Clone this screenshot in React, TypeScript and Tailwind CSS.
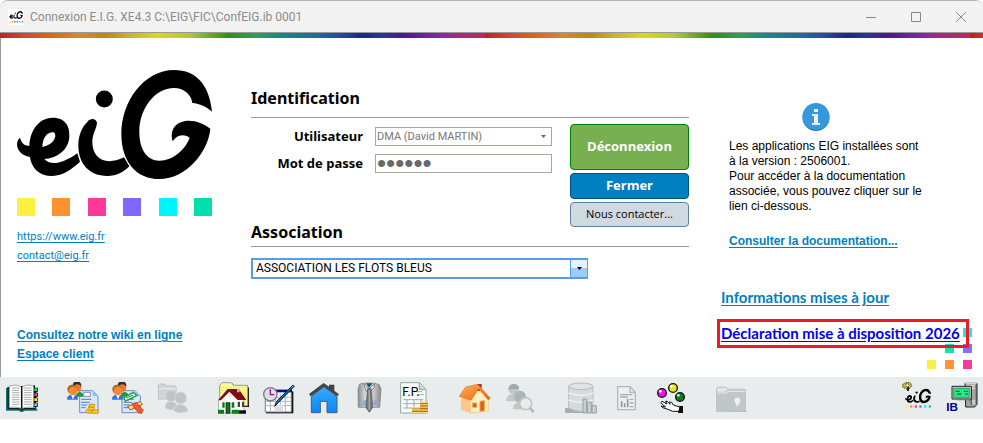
import type { ReactNode } from 'react';

const UI = 'font-["Roboto","Liberation_Sans",sans-serif]';
const UI_BOLD = 'font-["Liberation_Sans",sans-serif] font-bold';
const LINK = 'text-[#0080c0] underline underline-offset-2';

const RAINBOW =
  'bg-[repeating-linear-gradient(90deg,#c02020_0px,#d04830_25px,#e06414_50px,#d88828_78px,#c08810_106px,#d0b030_130px,#d8d820_158px,#b0c838_190px,#60a820_212px,#309010_228px,#30a050_255px,#188888_280px,#2068a0_318px,#2050a0_338px,#182888_362px,#3030a0_384px,#481890_402px,#7020a0_425px,#9028a0_443px,#a82880_460px,#c02858_485px)]';

function LogoShapes() {
  return (
    <g fill="#000">
      <path
        fillRule="evenodd"
        d="M60 262C65 278 72 286 88 286C91 235 120 202 158 202C198 202 210 230 208 260C205 300 170 324 133 326C150 345 182 344 232 309L240 334C210 361 186 377 152 377C114 377 93 347 90 320C65 316 51 300 51 281C51 271 56 266 60 262ZM127 290C128 258 145 243 162 246C174 259 158 285 127 290Z"
      />
      <circle cx="313" cy="146" r="25.500" />
      <path d="M262 215C271 202 289 204 291 218C288 241 277 248 277 276C277 320 312 350 372 321L388 348C370 366 350 377 322 377C267 377 235 340 235 285C235 256 246 229 262 215Z" />
      <path d="M636 184C628 105 590 59 522 59C431 59 364 155 364 250C364 337 411 386 478 386C559 386 625 304 631 235C612 220 590 211 567 211C527 211 508 239 518 273C530 254 549 249 569 262C557 296 520 331 478 331C440 331 418 296 418 245C418 173 466 113 522 113C551 113 574 132 577 158C599 160 621 170 636 184Z" />
    </g>
  );
}

const LOGO_COLORS = ['#fcf040', '#ff9133', '#fc3a9c', '#7d69ff', '#00f4ff', '#00dfab'];

function Glyph({ children, dim = false }: { children: ReactNode; dim?: boolean }) {
  return (
    <svg viewBox="0 0 96 96" className={dim ? 'size-8 opacity-80' : 'size-8'} aria-hidden="true">
      {children}
    </svg>
  );
}

function People() {
  return (
    <>
      <circle cx="30" cy="10" r="13" fill="#352b38" />
      <circle cx="31" cy="18" r="11" fill="#ef7624" />
      <path d="M26 44Q28 30 39 30Q49 31 49 44Z" fill="#24963a" />
      <circle cx="15" cy="22" r="14" fill="#a96b23" />
      <circle cx="18" cy="27" r="13" fill="#f58a36" />
      <path d="M0 53Q0 39 12 39L18 45L24 39Q33 41 33 53Z" fill="#3472e4" />
      <path d="M13 40L18 53L23 40Z" fill="#fff" />
    </>
  );
}

function Sheet() {
  return (
    <>
      <path d="M38 26H77L93 42V92H38Z" fill="#d7e9ff" stroke="#7189c2" strokeWidth="3" />
      <path d="M77 26V42H93Z" fill="#83c4ff" />
      <path d="M43 52H73M43 61H68M43 69H61M43 77H56" stroke="#5879b0" strokeWidth="3" />
    </>
  );
}

function Ball({ x, y, c }: { x: number; y: number; c: string }) {
  return (
    <>
      <circle cx={x} cy={y} r="13" fill={c} stroke="#111" strokeWidth="4" />
      <circle cx={x - 5} cy={y - 5} r="4" fill="#fff" />
    </>
  );
}

const groups: { label: string; icon: ReactNode }[][] = [
  [
    {
      label: 'Annuaire',
      icon: (
        <Glyph>
          <path d="M0 18H6V80H42L47 86L53 80H94V86H57L47 91L38 86H0Z" fill="#087878" />
          <path d="M4 15H10V78H43L47 83L51 78H90V82H54L47 88L40 82H4Z" fill="#102020" />
          <path d="M10 12Q31 5 46 14V80Q32 72 10 77Z" fill="#fff" stroke="#777" strokeWidth="2" />
          <path d="M84 12Q65 5 48 14V80Q62 72 84 77Z" fill="#fff" stroke="#777" strokeWidth="2" />
          <path d="M18 18H40M18 25H40M18 32H40M18 39H40M18 46H40M18 53H40M18 60H40M18 67H40M54 18H77M54 25H77M54 32H77M54 39H77M54 46H77M54 53H77M54 60H77M54 67H77" stroke="#aaa" strokeWidth="3" />
          <path d="M47 12V82M85 10V76" stroke="#111" strokeWidth="4" />
          <path d="M87 18H91V77H87Z" fill="#111" />
          <path d="M85 17H96V29H85ZM85 32H96V44H85ZM85 47H96V59H85ZM85 62H96V74H85Z" fill="#111" />
          <path d="M85 19H94V27H85Z" fill="#18d840" />
          <path d="M85 34H94V42H85Z" fill="#f020f0" />
          <path d="M85 49H94V57H85Z" fill="#f4e820" />
          <path d="M85 64H94V72H85Z" fill="#20e8f0" />
        </Glyph>
      ),
    },
  ],
  [
    {
      label: 'Facturation',
      icon: (
        <Glyph>
          <Sheet />
          <path d="M50 31H70V43H50Z" fill="#fff" stroke="#555f91" strokeWidth="2" />
          <People />
          <g fill="#ffc928" stroke="#b97708" strokeWidth="2">
            <rect x="57" y="83" width="21" height="10" rx="4" />
            <rect x="63" y="75" width="19" height="9" rx="4" />
            <path d="M68 66L84 67L81 76L65 74Z" />
            <rect x="75" y="84" width="20" height="10" rx="4" />
          </g>
        </Glyph>
      ),
    },
    {
      label: 'Validation des dossiers',
      icon: (
        <Glyph>
          <g transform="translate(-8 0)">
            <Sheet />
          </g>
          <People />
          <path d="M35 46L64 31L75 41L40 57Z" fill="#c9f4d3" stroke="#319848" strokeWidth="4" />
          <path d="M42 47L63 40M47 55L66 46" stroke="#319848" strokeWidth="3" />
          <path d="M47 73L84 59L92 67L55 84Z" fill="#ffd787" stroke="#9d6427" strokeWidth="3" />
          <path d="M60 65L73 62L94 84L88 95L78 91L65 76Z" fill="#f45a2d" stroke="#ad3515" strokeWidth="2" />
        </Glyph>
      ),
    },
    {
      label: 'Dossiers usagers',
      icon: (
        <Glyph dim>
          <path d="M4 9L8 6H24L29 12H57V51H4Z" fill="#ccd0d0" stroke="#b3b8b8" strokeWidth="3" />
          <path d="M5 20H57" stroke="#eef0f0" strokeWidth="3" />
          <g fill="#b5bbbb" stroke="#d9dddd" strokeWidth="2">
            <path d="M24 77Q25 58 41 58Q60 59 61 77Q41 91 24 77Z" />
            <circle cx="42" cy="42" r="17" />
            <path d="M50 87Q53 68 70 67Q91 69 93 87Q71 99 50 87Z" />
            <circle cx="71" cy="48" r="18" />
          </g>
        </Glyph>
      ),
    },
  ],
  [
    {
      label: 'Établissement',
      icon: (
        <Glyph>
          <path d="M6 13L14 3H42L49 12H88L93 18V75H6Z" fill="#111" />
          <path d="M5 11L13 2H40L47 10H89V71H5Z" fill="#fffb9a" stroke="#969696" strokeWidth="3" />
          <path d="M8 17H87M8 25H87M8 33H87M70 41H87M78 49H87" stroke="#e8d828" strokeWidth="3" strokeDasharray="3 3" />
          <path d="M2 55L33 23L78 55V93H2Z" fill="#fff" stroke="#888" strokeWidth="2" />
          <path d="M0 55L29 21H62L85 54H59L34 29L9 55Z" fill="#800b13" />
          <path d="M57 20H65V31H57Z" fill="#b6b6b6" />
          <path d="M24 62H36V94H24Z" fill="#087d16" stroke="#111" strokeWidth="2" />
          <path d="M13 61H20V77H13ZM41 61H49V77H41Z" fill="#087d16" />
          <path d="M59 59H66V75H59ZM72 59H78V75H72Z" fill="#444" />
          <path d="M0 83H18V95H0ZM41 83H63V95H41Z" fill="#078316" />
          <path d="M63 85H84V95H63Z" fill="#111" />
        </Glyph>
      ),
    },
    {
      label: 'Planning',
      icon: (
        <Glyph>
          <path d="M9 28H91V94H9Z" fill="#111" />
          <path d="M7 25H85V90H7Z" fill="#fff" stroke="#777" strokeWidth="3" />
          <path d="M28 23H87V31H28Z" fill="#08107b" />
          <path d="M22 36V89M37 36V89M52 36V89M67 36V89M8 46H84M8 58H84M8 71H84" stroke="#b2b2b2" strokeWidth="3" />
          <path d="M36 69H60V88H36Z" fill="#dededf" />
          <circle cx="22" cy="37" r="20" fill="#dfe0e5" stroke="#777784" strokeWidth="4" />
          <path d="M22 22V38H34" stroke="#940f96" strokeWidth="4" fill="none" />
          <path d="M94 13L43 65L35 73L42 57L89 10Z" fill="#18c6dd" stroke="#111" strokeWidth="3" />
          <path d="M86 18L39 67" stroke="#124d9e" strokeWidth="4" />
        </Glyph>
      ),
    },
    {
      label: 'Accueil',
      icon: (
        <Glyph>
          <defs>
            <linearGradient id="home-blue" x1="0" y1="0" x2="0" y2="1">
              <stop stopColor="#38aaff" />
              <stop offset="1" stopColor="#0889f8" />
            </linearGradient>
          </defs>
          <path d="M10 43L48 14L87 44V92H57V58H37V92H10Z" fill="url(#home-blue)" stroke="#4d5970" strokeWidth="3" />
          <path d="M3 36L47 3L63 14V8H79V26L93 37L88 43L48 14L8 43Z" fill="#414345" />
        </Glyph>
      ),
    },
    {
      label: 'Personnel',
      icon: (
        <Glyph>
          <defs>
            <linearGradient id="shirt" x1="0" y1="0" x2="1" y2="0">
              <stop stopColor="#898b8d" />
              <stop offset="0.300" stopColor="#d4d6d9" />
              <stop offset="0.700" stopColor="#c4c6ca" />
              <stop offset="1" stopColor="#85878a" />
            </linearGradient>
          </defs>
          <path d="M20 6L36 3H62L79 8L84 21L80 76H16L15 21Z" fill="url(#shirt)" stroke="#777" strokeWidth="2" />
          <path d="M33 5L48 21L64 5V15L53 28L48 21L40 28L34 13Z" fill="#e7e7e7" stroke="#555" strokeWidth="2" />
          <path d="M39 4H58L48 17Z" fill="#0f5870" />
          <path d="M26 57L40 53V71H26ZM60 58H77V70H60Z" fill="#8ab8c6" />
          <path d="M64 53H74V68H64Z" fill="#aa9ad3" />
          <path d="M44 20H54L59 76L49 91L39 77Z" fill="#777a7d" stroke="#4c4c50" strokeWidth="2" />
          <path d="M49 24V83" stroke="#aaaeb0" strokeWidth="4" />
        </Glyph>
      ),
    },
    {
      label: 'Fiche de paie',
      icon: (
        <Glyph>
          <path d="M8 2H65L84 22V93H8Z" fill="#f7fcfb" stroke="#91a8a5" strokeWidth="3" />
          <path d="M64 3V23H83" fill="#cad8d5" stroke="#91a8a5" strokeWidth="3" />
          <path d="M56 29H73M56 38H78M16 53H76M16 65H76M16 78H49M27 53V79M48 53V79M68 53V79" stroke="#9eaead" strokeWidth="3" />
          <text x="13" y="43" fontFamily="Roboto" fontSize="36">F.P.</text>
          <path d="M66 59H90V94H66ZM42 76H66V94H42Z" fill="#d89c2c" />
          <path d="M66 61H90M66 68H90M66 75H90M42 77H65M42 84H90M42 91H90" stroke="#ffe393" strokeWidth="3" />
          <path d="M66 65H90M66 72H90M66 80H90M42 88H90" stroke="#895410" strokeWidth="2" />
        </Glyph>
      ),
    },
  ],
  [
    {
      label: 'Hébergement',
      icon: (
        <Glyph>
          <defs>
            <linearGradient id="roof" x1="0" y1="0" x2="1" y2="1">
              <stop stopColor="#ffb358" />
              <stop offset="1" stopColor="#ed5d0b" />
            </linearGradient>
          </defs>
          <path d="M8 44L60 20L88 50V87L35 93L7 82Z" fill="#fff2c0" stroke="#efbb6b" strokeWidth="2" />
          <path d="M8 46L35 53V92L7 82Z" fill="#ffc68a" />
          <path d="M54 6H68V27H54Z" fill="#9e381e" />
          <path d="M20 15L56 7L94 49L87 53L59 20L36 55L1 43Z" fill="url(#roof)" stroke="#e6711e" strokeWidth="2" />
          <path d="M41 63H53V76H41ZM63 58L76 56V86L63 88Z" fill="#dd5923" stroke="#f4a04b" strokeWidth="3" />
        </Glyph>
      ),
    },
    {
      label: 'Recherche',
      icon: (
        <Glyph dim>
          <g fill="#b9bfc0">
            <circle cx="29" cy="22" r="16" />
            <path d="M6 58Q8 35 27 37Q47 38 49 58Z" />
            <circle cx="48" cy="44" r="18" fill="#9fa7a8" />
            <path d="M26 82Q28 60 47 60Q69 62 70 82Z" />
          </g>
          <path d="M13 22Q15 6 30 6Q45 7 45 21Z" fill="#929a9b" />
          <circle cx="65" cy="65" r="18" fill="#eceeee" stroke="#b6bcbd" strokeWidth="5" />
          <path d="M77 77L89 90" stroke="#a8afb0" strokeWidth="8" />
        </Glyph>
      ),
    },
  ],
  [
    {
      label: 'Base de données',
      icon: (
        <Glyph dim>
          <path d="M0 78H26L84 83V93H0Z" fill="#969fa0" />
          <path d="M11 12V78Q48 98 84 78V12Z" fill="#d1d6d6" stroke="#aeb5b6" strokeWidth="3" />
          <ellipse cx="47.500" cy="13" rx="36.500" ry="10" fill="#dce0e0" stroke="#aab1b2" strokeWidth="3" />
          <path d="M11 33Q48 47 84 33M11 54Q48 68 84 54" stroke="#f0f2f2" strokeWidth="5" fill="none" />
          <path d="M54 51H65V93H54ZM67 60H79V93H67ZM81 71H94V93H81Z" fill="#c2c8c9" stroke="#858e90" strokeWidth="3" />
        </Glyph>
      ),
    },
    {
      label: 'Rapports',
      icon: (
        <Glyph dim>
          <path d="M23 14H60L76 31V83H23Z" fill="#f0f2f2" stroke="#a3aaac" strokeWidth="4" />
          <path d="M60 14V31H76" fill="none" stroke="#a3aaac" strokeWidth="4" />
          <path d="M30 38H67M30 45H53M59 52H70M59 63H70M59 74H70" stroke="#959d9f" strokeWidth="4" />
          <path d="M35 76V58M44 76V64M53 76V50" stroke="#7b8587" strokeWidth="5" />
        </Glyph>
      ),
    },
    {
      label: 'Activités',
      icon: (
        <Glyph>
          <Ball x={21} y={33} c="#ee12e7" />
          <Ball x={54} y={18} c="#eae818" />
          <Ball x={75} y={45} c="#087f16" />
          <path d="M17 62L21 58L36 66L32 57L40 60L45 67L44 60L50 61L55 69L75 75V88H53L39 82L23 77L18 72L32 75L17 62Z" fill="#fff" stroke="#111" strokeWidth="3" />
          <path d="M74 72H84V93H69Z" fill="#111" />
        </Glyph>
      ),
    },
  ],
  [
    {
      label: 'Documents',
      icon: (
        <Glyph dim>
          <path d="M2 19L6 16H28L36 22H87V88H2Z" fill="#e5e8e8" stroke="#adb4b4" strokeWidth="3" />
          <path d="M2 29H27L33 24H90V87H3Z" fill="#b8bfbf" />
          <path d="M4 33H30L36 28H87" stroke="#e9eded" strokeWidth="3" fill="none" />
          <path d="M56 50Q63 43 72 50Q75 64 67 66V72H61V66Q54 62 56 50Z" fill="#f1f3f3" />
          <path d="M44 88H92" stroke="#afb6b6" strokeWidth="4" />
        </Glyph>
      ),
    },
  ],
];

const tools = [
  {
    label: 'Paramètres EIG',
    icon: (
      <Glyph>
        <path d="M5 8L12 3L20 0L28 3L32 10L27 19L20 22L13 19L6 16Z" fill="#d6cb20" stroke="#393807" strokeWidth="3" strokeDasharray="4 2" />
        <circle cx="19" cy="10" r="5" fill="#fff" stroke="#333" strokeWidth="2" />
        <path d="M18 15H24V27H18Z" fill="#222" />
        <svg x="12" y="19" width="78" height="46" viewBox="51 59 585 327">
          <LogoShapes />
        </svg>
        {LOGO_COLORS.map((c, i) => (
          <rect key={c} x={13 + i * 14} y="70" width="7" height="7" fill={c} />
        ))}
      </Glyph>
    ),
  },
  {
    label: 'InterBase',
    icon: (
      <Glyph>
        <path d="M57 4H93V67L86 75H59Z" fill="#a6a6a6" stroke="#222" strokeWidth="3" />
        <path d="M58 5H92M60 12H86M72 19H88M77 57H89M77 63H89" stroke="#eee" strokeWidth="3" />
        <path d="M76 19V68M91 8V66" stroke="#555" strokeWidth="4" />
        <path d="M18 13H76V51H18Z" fill="#d0d0d0" stroke="#222" strokeWidth="3" />
        <path d="M23 19H70V46H23Z" fill="#29e98a" stroke="#087d4e" strokeWidth="2" />
        <path d="M29 28H42M53 28H66M33 36H46M58 36H65" stroke="#087747" strokeWidth="4" />
        <path d="M32 53H69L77 59" stroke="#777" strokeWidth="4" fill="none" />
        <text x="1" y="87" fontFamily="Liberation Sans" fontWeight="bold" fontSize="35" fill="#000080">IB</text>
      </Glyph>
    ),
  },
];

function ToolButton({ label, icon }: { label: string; icon: ReactNode }) {
  return (
    <button type="button" aria-label={label} className="size-8 shrink-0">
      {icon}
    </button>
  );
}

function TitleBar() {
  return (
    <header className="flex h-8 items-center border-b border-[#999] bg-[#f2f2f2] pl-2">
      <svg viewBox="0 0 32 32" className="size-4 bg-white" aria-hidden="true">
        <svg x="2" y="4" width="28" height="16" viewBox="51 59 585 327">
          <LogoShapes />
        </svg>
        {LOGO_COLORS.map((c, i) => (
          <rect key={c} x={2 + i * 5} y="24" width="3" height="3" fill={c} />
        ))}
      </svg>
      <h1 className={`ml-1.5 flex-1 text-[12px] text-[#8c8c8c] ${UI}`}>
        Connexion E.I.G. XE4.3 C:\EIG\FIC\ConfEIG.ib 0001
      </h1>
      {[
        { label: 'Réduire', d: 'M0 5.500H10' },
        { label: 'Agrandir', d: 'M.5 .5H9.500V9.500H.5Z' },
        { label: 'Quitter', d: 'M0 0L10 10M10 0L0 10' },
      ].map((b) => (
        <button key={b.label} type="button" aria-label={b.label} className="flex h-full w-[45px] items-center justify-center">
          <svg viewBox="0 0 10 10" className="size-2.5 overflow-visible" fill="none" stroke="#888">
            <path d={b.d} />
          </svg>
        </button>
      ))}
    </header>
  );
}

function SectionTitle({ children, tight = false }: { children: ReactNode; tight?: boolean }) {
  return (
    <h2
      className={`border-b border-[#999] font-["Noto_Sans",sans-serif] text-[16px] leading-[22px] font-bold text-black ${tight ? 'pb-[3px]' : 'pb-2'}`}
    >
      {children}
    </h2>
  );
}

export default function App() {
  return (
    <div className="flex min-h-screen flex-col overflow-hidden rounded-lg border-t border-[#b4b4b4] bg-white">
      <TitleBar />
      <div className={`h-[5px] ${RAINBOW}`} />

      <main className="relative flex flex-1 border-l border-[#999] pb-2 pl-4">
        <section className="flex w-[234px] shrink-0 flex-col pt-8">
          <svg viewBox="51 59 585 327" className="h-[109px] w-[195px]" role="img" aria-label="eiG">
            <LogoShapes />
          </svg>
          <div className="mt-[19px] flex w-[195px] justify-between">
            <span className="size-[18px] bg-[#fcf040]" />
            <span className="size-[18px] bg-[#ff9133]" />
            <span className="size-[18px] bg-[#fc3a9c]" />
            <span className="size-[18px] bg-[#7d69ff]" />
            <span className="size-[18px] bg-[#00f4ff]" />
            <span className="size-[18px] bg-[#00dfab]" />
          </div>
          <nav className={`mt-[11px] flex flex-col items-start text-[11px] leading-[19px] ${UI}`}>
            <a href="#site" className={LINK}>https://www.eig.fr</a>
            <a href="#contact" className={LINK}>contact@eig.fr</a>
          </nav>
          <nav className={`mt-auto mb-[5px] flex flex-col items-start text-[12px] leading-[19px] ${UI_BOLD}`}>
            <a href="#wiki" className={LINK}>Consultez notre wiki en ligne</a>
            <a href="#client" className={LINK}>Espace client</a>
          </nav>
        </section>

        <form className="mr-7 min-w-0 flex-1 pt-[49px]" onSubmit={(e) => e.preventDefault()}>
          <SectionTitle>Identification</SectionTitle>
          <div className="mt-1.5 flex justify-between">
            <div className='grid grid-cols-[112px_177px] content-start items-center gap-x-3 gap-y-2 pt-[3px] font-["Noto_Sans",sans-serif] text-[13px] leading-[19px] font-bold'>
              <label htmlFor="user" className="text-right">Utilisateur</label>
              <div className="relative flex">
                <select id="user" disabled className={`h-[19px] w-full appearance-none border border-[#aca899] bg-white pl-px text-[11px] leading-[17px] font-normal text-[#777] opacity-100 ${UI}`}>
                  <option>DMA (David MARTIN)</option>
                </select>
                <svg viewBox="0 0 5 3" className="pointer-events-none absolute top-2 right-1.5 h-[3px] w-[5px]" fill="#666">
                  <path d="M0 0H5L2.500 3Z" />
                </svg>
              </div>
              <label htmlFor="pass" className="text-right">Mot de passe</label>
              <input id="pass" type="password" disabled defaultValue="eigeig" className='h-[19px] w-full border border-[#aca899] bg-white px-px font-["Liberation_Sans",sans-serif] text-[26px] leading-[17px] font-normal text-[#696969]' />
            </div>
            <div className='flex w-[119px] flex-col gap-[3px] font-["Open_Sans",sans-serif] text-[13px] font-bold text-white'>
              <button type="button" className="h-[46px] rounded border border-[#008000] bg-[#78af50]">Déconnexion</button>
              <button type="button" className="h-[26px] rounded border border-[#005080] bg-[#0080c0]">Fermer</button>
              <button type="button" className="h-[25px] rounded border border-[#6080a0] bg-[#d0d8e0] text-[11px] font-normal text-black">Nous contacter...</button>
            </div>
          </div>
          <div className="-mt-1.5">
            <SectionTitle tight>Association</SectionTitle>
          </div>
          <div className="relative mt-[11px] flex w-[337px]">
            <select aria-label="Association" className={`h-[21px] w-full appearance-none border-2 border-[#569de5] bg-white pl-[3px] text-[12px] leading-[17px] text-black ${UI}`}>
              <option>ASSOCIATION LES FLOTS BLEUS</option>
            </select>
            <span className="pointer-events-none absolute inset-y-0.5 right-px flex w-[17px] items-center justify-center border-l border-[#569de5] bg-linear-to-b from-[#e5f1ff] from-50% to-[#9ccdfa] to-50%">
              <svg viewBox="0 0 5 3" className="h-[3px] w-[5px]">
                <path d="M0 0H5L2.500 3Z" />
              </svg>
            </span>
          </div>
        </form>

        <aside className="flex w-[266px] shrink-0 flex-col items-start pt-[65px]">
          <svg viewBox="0 0 28 28" className="ml-[85px] size-7" aria-hidden="true">
            <circle cx="14" cy="14.500" r="13.500" fill="#2476ac" />
            <circle cx="14" cy="13.500" r="13.500" fill="#3498db" />
            <path d="M12 6H16V9H12ZM10 11H16V20H18V22H10V20H12V13H10Z" fill="#ecf0f1" />
          </svg>
          <p className='ml-3 pt-2 font-["Liberation_Sans",sans-serif] text-[12px] leading-[15px] text-black'>
            Les applications EIG installées sont<br />
            à la version : 2506001.<br />
            Pour accéder à la documentation<br />
            associée, vous pouvez cliquer sur le<br />
            lien ci-dessous.
          </p>
          <a href="#docs" className={`mt-[18px] ml-3 text-[12px] leading-[19px] ${UI_BOLD} ${LINK}`}>
            Consulter la documentation...
          </a>
          <div className='z-10 mt-[35px] flex flex-col items-start font-["Lato",sans-serif] text-[15px] leading-[23px] font-bold'>
            <a href="#infos" className={`ml-1 ${LINK}`}>Informations mises à jour</a>
            <a href="#declaration" className="mt-[10px] w-[252px] border-3 border-[#ed1c24] px-px whitespace-nowrap text-[#0000f5] underline underline-offset-2">
              Déclaration mise à disposition 2026
            </a>
          </div>
        </aside>

        <div className="pointer-events-none absolute right-[11px] bottom-2 grid grid-cols-3 gap-x-[9px] gap-y-[7px]">
          <span className="col-start-3 size-[9px] bg-[#28e1ea]" />
          <span className="col-start-2 size-[9px] bg-[#14dfae]" />
          <span className="size-[9px] bg-[#8370fa]" />
          <span className="size-[9px] bg-[#faef48]" />
          <span className="size-[9px] bg-[#ff9336]" />
          <span className="size-[9px] bg-[#f93a9b]" />
        </div>
      </main>

      <div role="toolbar" aria-label="Modules" className="flex items-center bg-[#e8ecec] py-[5px] pr-[5px] pl-1.5">
        <div className="flex flex-1 gap-[29px]">
          {groups.map((g) => (
            <div key={g[0].label} className="flex gap-[13px]">
              {g.map((t) => (
                <ToolButton key={t.label} {...t} />
              ))}
            </div>
          ))}
        </div>
        <div className="flex gap-[13px]">
          {tools.map((t) => (
            <ToolButton key={t.label} {...t} />
          ))}
        </div>
      </div>
      <div className="h-6" />
    </div>
  );
}
